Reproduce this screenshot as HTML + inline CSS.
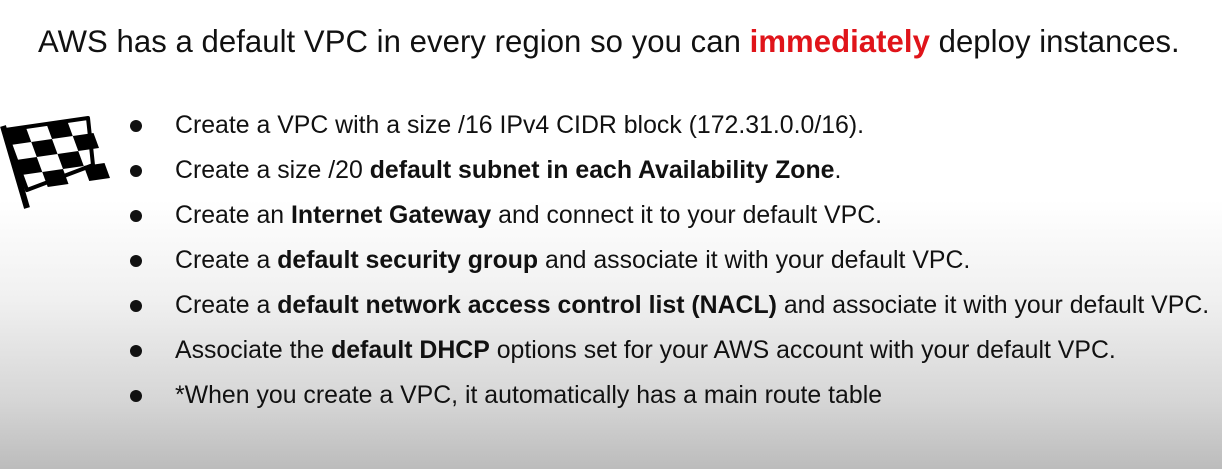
<!DOCTYPE html>
<html><head><style>
body{margin:0;width:1222px;height:469px;overflow:hidden;font-family:"Liberation Sans",Arial,sans-serif;color:#111;
background:linear-gradient(to bottom,#fff 0px,#fff 200px,#f0f0f0 300px,#d6d6d6 400px,#bcbcbc 469px);position:relative}
.t{position:absolute;left:38px;top:24px;font-size:31.1px;white-space:nowrap;letter-spacing:0.05px}
.t b{color:#e0141a}
.l{position:absolute;left:175px;font-size:24.85px;white-space:nowrap}
.d{position:absolute;left:130px;width:12px;height:12px;border-radius:50%;background:#111}
</style></head><body>
<div class="t">AWS has a default VPC in every region so you can <b>immediately</b> deploy instances.</div>
<svg style="position:absolute;left:0;top:0" width="110" height="220" viewBox="0 0 110 220">
<line x1="3" y1="126" x2="27" y2="208" stroke="#000" stroke-width="6"/>
<polygon points="5,130 88,118 93,165 27,190" fill="#fff" stroke="#000" stroke-width="4" stroke-linejoin="round"/>
<g transform="matrix(83,-12,22,60,5,130)">
<rect x="0" y="0" width="0.25" height="0.25"/><rect x="0.5" y="0" width="0.25" height="0.25"/>
<rect x="0.25" y="0.25" width="0.25" height="0.25"/><rect x="0.75" y="0.25" width="0.25" height="0.25"/>
<rect x="0" y="0.5" width="0.25" height="0.25"/><rect x="0.5" y="0.5" width="0.25" height="0.25"/>
<rect x="0.25" y="0.75" width="0.25" height="0.25"/><rect x="0.75" y="0.75" width="0.25" height="0.25"/>
</g>
</svg>
<div class="d" style="top:120px"></div><div class="l" style="top:112px">Create a VPC with a size /16 IPv4 CIDR block (172.31.0.0/16).</div>
<div class="d" style="top:165px"></div><div class="l" style="top:157px">Create a size /20 <b>default subnet in each Availability Zone</b>.</div>
<div class="d" style="top:210px"></div><div class="l" style="top:202px">Create an <b>Internet Gateway</b> and connect it to your default VPC.</div>
<div class="d" style="top:255px"></div><div class="l" style="top:247px">Create a <b>default security group</b> and associate it with your default VPC.</div>
<div class="d" style="top:300px"></div><div class="l" style="top:292px">Create a <b>default network access control list (NACL)</b> and associate it with your default VPC.</div>
<div class="d" style="top:345px"></div><div class="l" style="top:337px">Associate the <b>default DHCP</b> options set for your AWS account with your default VPC.</div>
<div class="d" style="top:390px"></div><div class="l" style="top:382px">*When you create a VPC, it automatically has a main route table</div>
</body></html>
